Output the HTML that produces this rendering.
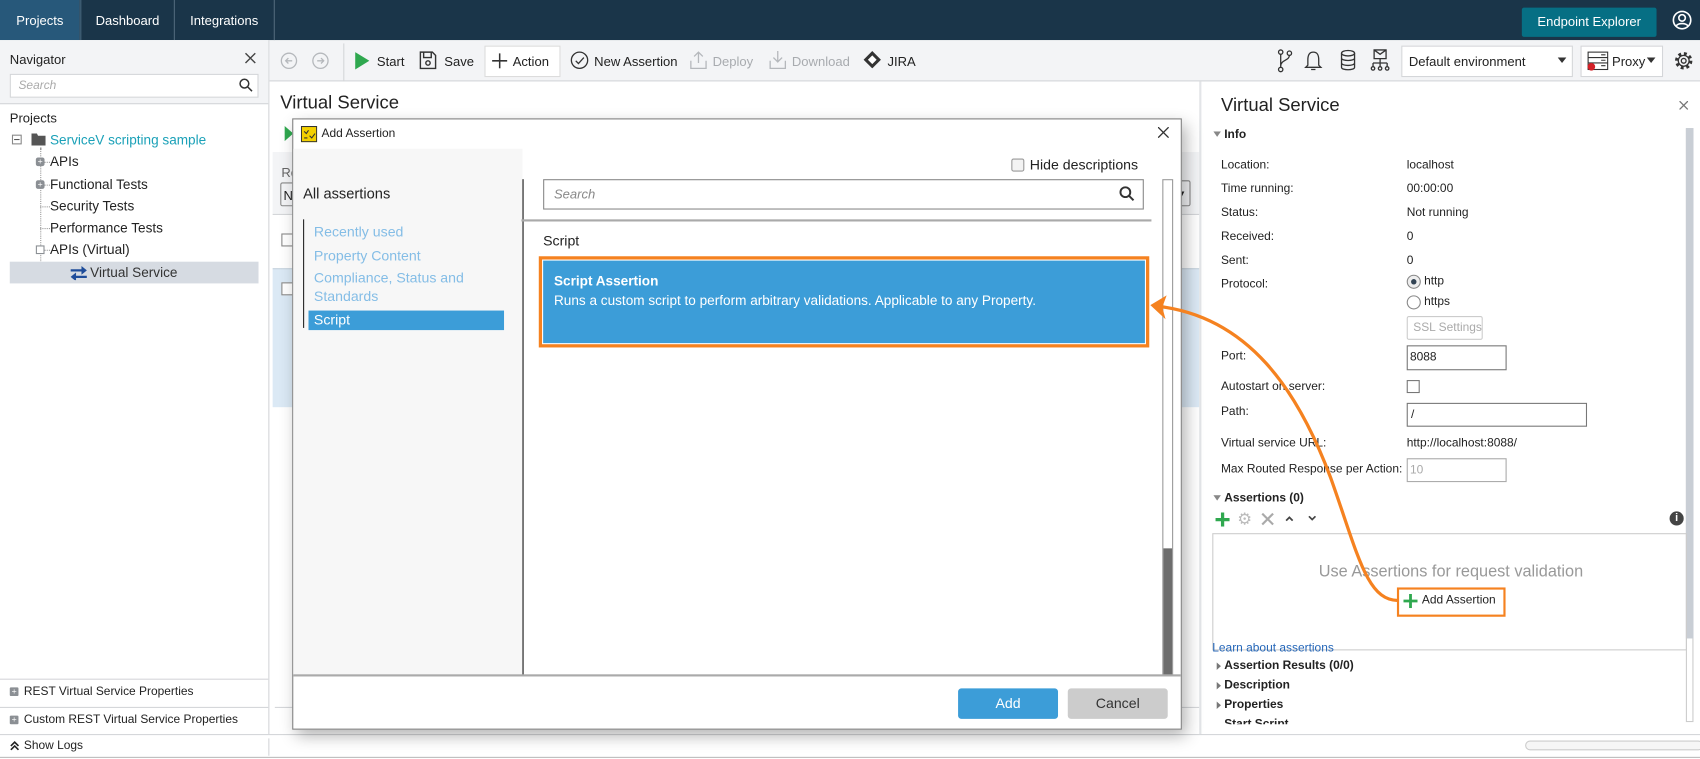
<!DOCTYPE html>
<html><head><meta charset="utf-8"><style>
*{box-sizing:border-box;margin:0;padding:0}
html,body{width:1700px;height:759px;overflow:hidden;background:#fff}
#w{position:absolute;left:0;top:0;width:1565px;height:699px;transform:scale(1.08626,1.08584);transform-origin:0 0;font-family:"Liberation Sans",sans-serif;font-size:12px;color:#222}
.a{position:absolute;white-space:nowrap}
.b{font-weight:bold}
</style></head><body><div id="w">
<!-- top bar -->
<div class="a" style="left:0;top:0;width:1565px;height:37px;background:#1a3549"></div>
<div class="a" style="left:0;top:0;width:73px;height:37px;background:#27587a"></div>
<div class="a" style="left:73px;top:0;width:2px;height:37px;background:#3b5a70"></div>
<div class="a" style="left:160px;top:0;width:1px;height:37px;background:#51697b"></div>
<div class="a" style="left:252px;top:0;width:1px;height:37px;background:#51697b"></div>
<div class="a" style="left:15px;top:12px;color:#fff;font-size:12px">Projects</div>
<div class="a" style="left:88px;top:12px;color:#fff;font-size:12px">Dashboard</div>
<div class="a" style="left:175px;top:12px;color:#fff;font-size:12px">Integrations</div>
<div class="a" style="left:1401px;top:7px;width:124px;height:27px;background:#066f84;border-radius:2px;color:#fff;font-size:12px;text-align:center;line-height:27px">Endpoint Explorer</div>
<svg class="a" style="left:1539px;top:9px" width="19" height="19" viewBox="0 0 19 19" fill="none" stroke="#fff" stroke-width="1.5"><circle cx="9.5" cy="9.5" r="8"/><circle cx="9.5" cy="7.5" r="3"/><path d="M4 15c2-3 9-3 11 0"/></svg>
<!-- toolbar -->
<div class="a" style="left:248px;top:37px;width:1317px;height:38px;background:#f3f4f6;border-bottom:1px solid #d4d6d9"></div>
<svg class="a" style="left:258px;top:48px" width="50" height="16" fill="none" stroke="#b5b8bc" stroke-width="1.2"><circle cx="8" cy="8" r="7"/><path d="M11 8H5M7.5 5.5 5 8l2.5 2.5"/><circle cx="37" cy="8" r="7"/><path d="M34 8h6M37.5 5.5 40 8l-2.5 2.5"/></svg>
<div class="a" style="left:316px;top:40px;width:1px;height:35px;background:#d4d6d9"></div>
<svg class="a" style="left:326px;top:48px" width="14" height="16"><path d="M1 0 14 8 1 16z" fill="#2fa84f"/></svg>
<div class="a" style="left:347px;top:50px">Start</div>
<svg class="a" style="left:386px;top:47px" width="16" height="17" fill="none" stroke="#333" stroke-width="1.3"><path d="M1 1h11l3 3v12H1z"/><path d="M4 1v5h7V1"/><circle cx="8" cy="11" r="2"/></svg>
<div class="a" style="left:409px;top:50px">Save</div>
<div class="a" style="left:446px;top:42px;width:70px;height:29px;background:#fff;border:1px solid #dcdcdc"></div>
<svg class="a" style="left:453px;top:49px" width="14" height="14" stroke="#333" stroke-width="1.4"><path d="M7 0v14M0 7h14"/></svg>
<div class="a" style="left:472px;top:50px">Action</div>
<svg class="a" style="left:525px;top:47px" width="17" height="17" fill="none" stroke="#333" stroke-width="1.2"><circle cx="8.5" cy="8.5" r="7.5"/><path d="M5 9l2.5 2.5L12.5 6"/></svg>
<div class="a" style="left:547px;top:50px">New Assertion</div>
<svg class="a" style="left:635px;top:46px" width="16" height="18" fill="none" stroke="#b5b8bc" stroke-width="1.2"><path d="M8 12V2M4 6l4-4 4 4M1 10v7h14v-7"/></svg>
<div class="a" style="left:656px;top:50px;color:#a8abaf">Deploy</div>
<svg class="a" style="left:708px;top:46px" width="16" height="18" fill="none" stroke="#b5b8bc" stroke-width="1.2"><path d="M8 1v10M4 7l4 4 4-4M1 10v7h14v-7"/></svg>
<div class="a" style="left:729px;top:50px;color:#a8abaf">Download</div>
<svg class="a" style="left:795px;top:47px" width="16" height="16"><path d="M8 0 16 8 8 16 0 8z" fill="#333"/><path d="M8 4 12 8 8 12 4 8z" fill="#fff"/></svg>
<div class="a" style="left:817px;top:50px">JIRA</div>
<svg class="a" style="left:1176px;top:45px" width="110" height="22" fill="none" stroke="#333" stroke-width="1.2"><circle cx="3" cy="3" r="2"/><circle cx="3" cy="19" r="2"/><circle cx="11" cy="4" r="2"/><path d="M3 5v12M11 6c0 5-8 4-8 10"/><path d="M33 3c-4 0-5 3-5 7v5l-2 2h14l-2-2v-5c0-4-1-7-5-7zM31 19h4"/><ellipse cx="65" cy="4" rx="6" ry="2.5"/><path d="M59 4v13c0 3 12 3 12 0V4M59 8.5c0 3 12 3 12 0M59 13c0 3 12 3 12 0"/><path d="M89 1h11v8H89zM89 1l5.5 4L100 1M94.5 9v4M88 13h13M88 13v3M94.5 13v3M101 13v3"/><circle cx="88" cy="18" r="1.6"/><circle cx="94.5" cy="18" r="1.6"/><circle cx="101" cy="18" r="1.6"/></svg>
<div class="a" style="left:1290px;top:42px;width:158px;height:29px;background:#fff;border:1px solid #d4d6d9"></div>
<div class="a" style="left:1297px;top:50px">Default environment</div>
<svg class="a" style="left:1434px;top:53px" width="8" height="5"><path d="M0 0h8L4 5z" fill="#333"/></svg>
<div class="a" style="left:1455px;top:42px;width:76px;height:29px;background:#fff;border:1px solid #d4d6d9"></div>
<svg class="a" style="left:1461px;top:47px" width="20" height="19" fill="none" stroke="#333" stroke-width="1"><rect x="1" y="1" width="18" height="16"/><path d="M1 6h18M1 11h18M13 3.5h4M13 8.5h4M13 13.5h4"/><circle cx="4" cy="14.5" r="3.5" fill="#d32027" stroke="none"/></svg>
<div class="a" style="left:1484px;top:50px">Proxy</div>
<svg class="a" style="left:1516px;top:53px" width="8" height="5"><path d="M0 0h8L4 5z" fill="#333"/></svg>
<svg class="a" style="left:1541px;top:47px" width="18" height="18" fill="none" stroke="#333"><circle cx="9" cy="9" r="6.5" stroke-width="3" stroke-dasharray="2.6 2.5"/><circle cx="9" cy="9" r="5" stroke-width="1.2"/><circle cx="9" cy="9" r="2.2" stroke-width="1.2"/></svg>
<!-- navigator -->
<div class="a" style="left:0;top:37px;width:248px;height:662px;background:#fff;border-right:1px solid #d4d6d9"></div>
<div class="a" style="left:0;top:37px;width:247px;height:59px;background:#f3f4f6;border-bottom:1px solid #d4d6d9"></div>
<div class="a" style="left:9px;top:48px">Navigator</div>
<svg class="a" style="left:225px;top:48px" width="11" height="11" stroke="#444" stroke-width="1.3"><path d="M1 1l9 9M10 1l-9 9"/></svg>
<div class="a" style="left:9px;top:68px;width:229px;height:22px;background:#fff;border:1px solid #d4d6d9"></div>
<div class="a" style="left:17px;top:73px;font-style:italic;color:#aaa;font-size:11px">Search</div>
<svg class="a" style="left:220px;top:72px" width="13" height="13" fill="none" stroke="#333" stroke-width="1.4"><circle cx="5" cy="5" r="4"/><path d="M8 8l4 4"/></svg>
<div class="a" style="left:9px;top:102px">Projects</div>
<div class="a" style="left:11px;top:124px;width:9px;height:9px;border:1px solid #888"></div>
<div class="a" style="left:13px;top:128px;width:5px;border-top:1px solid #555"></div>
<svg class="a" style="left:29px;top:122px" width="13" height="12"><path d="M0 1h5l1 2h7v9H0z" fill="#555"/></svg>
<div class="a" style="left:46px;top:122px;color:#1ba1b8;font-size:12.5px">ServiceV scripting sample</div>
<div class="a" style="left:37px;top:136px;width:0;height:114px;border-left:1px dotted #999"></div>
<div class="a" style="left:52px;top:250px;width:0;height:9px;border-left:1px dotted #999"></div>
<div class="a" style="left:52px;top:259px;width:12px;height:0;border-top:1px dotted #999"></div>
<div class="a" style="left:37px;top:149px;width:9px;border-top:1px dotted #999"></div>
<div class="a" style="left:37px;top:170px;width:9px;border-top:1px dotted #999"></div>
<div class="a" style="left:37px;top:190px;width:9px;border-top:1px dotted #999"></div>
<div class="a" style="left:37px;top:210px;width:9px;border-top:1px dotted #999"></div>
<div class="a" style="left:37px;top:230px;width:9px;border-top:1px dotted #999"></div>
<div class="a" style="left:33px;top:145px;width:8px;height:8px;background:#8b8f94;border-radius:2px;color:#fff;font-size:8px;line-height:8px;text-align:center">+</div>
<div class="a" style="left:33px;top:166px;width:8px;height:8px;background:#8b8f94;border-radius:2px;color:#fff;font-size:8px;line-height:8px;text-align:center">+</div>
<div class="a" style="left:33px;top:226px;width:8px;height:8px;border:1px solid #8b8f94;background:#fff"></div>
<div class="a" style="left:46px;top:142px;font-size:12.5px">APIs</div>
<div class="a" style="left:46px;top:163px;font-size:12.5px">Functional Tests</div>
<div class="a" style="left:46px;top:183px;font-size:12.5px">Security Tests</div>
<div class="a" style="left:46px;top:203px;font-size:12.5px">Performance Tests</div>
<div class="a" style="left:46px;top:223px;font-size:12.5px">APIs (Virtual)</div>
<div class="a" style="left:9px;top:241px;width:229px;height:20px;background:#d6dbe2"></div>
<svg class="a" style="left:65px;top:244px" width="15" height="14" fill="#1f4d9a"><path d="M0 4h10V1l5 4-5 4V6H0zM15 10H5V7l-5 4 5 4v-3h10z"/></svg>
<div class="a" style="left:83px;top:244px;font-size:12.5px;color:#333">Virtual Service</div>
<div class="a" style="left:0;top:625px;width:247px;border-top:1px solid #d4d6d9"></div>
<div class="a" style="left:9px;top:633px;width:8px;height:8px;background:#8b8f94;border-radius:1px;color:#fff;font-size:8px;line-height:8px;text-align:center">+</div>
<div class="a" style="left:22px;top:631px;font-size:11px">REST Virtual Service Properties</div>
<div class="a" style="left:0;top:651px;width:247px;border-top:1px solid #d4d6d9"></div>
<div class="a" style="left:9px;top:659px;width:8px;height:8px;background:#8b8f94;border-radius:1px;color:#fff;font-size:8px;line-height:8px;text-align:center">+</div>
<div class="a" style="left:22px;top:657px;font-size:11px">Custom REST Virtual Service Properties</div>
<div class="a" style="left:0;top:676px;width:1565px;border-top:1px solid #d4d6d9;height:23px;background:#fff"></div>
<div class="a" style="left:0;top:697px;width:1565px;border-top:1px solid #bbb"></div>
<svg class="a" style="left:9px;top:682px" width="9" height="9" fill="none" stroke="#222" stroke-width="1.5"><path d="M1 5l3.5-3.5L8 5M1 8.5 4.5 5 8 8.5"/></svg>
<div class="a" style="left:22px;top:681px;font-size:11px">Show Logs</div>
<div class="a" style="left:247px;top:680px;height:16px;border-left:1px solid #d4d6d9"></div>
<div class="a" style="left:1404px;top:682px;width:164px;height:9px;border:1px solid #ccc;border-radius:5px;background:#f6f6f6"></div>
<!-- center behind -->
<div class="a" style="left:258px;top:85px;font-size:17px">Virtual Service</div>
<svg class="a" style="left:262px;top:116px" width="8" height="14"><path d="M0 0 8 7 0 14z" fill="#2fa84f"/></svg>
<div class="a" style="left:251px;top:140px;width:853px;height:58px;background:#f3f4f6;border-bottom:1px solid #d4d6d9"></div>
<div class="a" style="left:259px;top:152px;color:#666">Ro</div>
<div class="a" style="left:258px;top:168px;width:14px;height:22px;border:1px solid #888;border-radius:2px;padding:4px 2px">N</div>
<div class="a" style="left:1081px;top:166px;width:15px;height:24px;border:1px solid #888;border-radius:2px;font-size:8px;padding:7px 2px">▼</div>
<div class="a" style="left:259px;top:215px;width:12px;height:12px;border:1px solid #888"></div>
<div class="a" style="left:251px;top:247px;width:853px;height:128px;background:#dbe9f5;border-top:1px solid #c6d2dc"></div>
<div class="a" style="left:259px;top:260px;width:12px;height:12px;border:1px solid #888;background:#fff"></div>
<div class="a" style="left:253px;top:651px;width:851px;border-top:1px solid #d4d6d9"></div>
<!-- right panel -->
<div class="a" style="left:1104px;top:75px;width:2px;height:601px;background:#e3e5e8"></div>
<div class="a" style="left:1124px;top:87px;font-size:17px">Virtual Service</div>
<svg class="a" style="left:1546px;top:93px" width="8" height="8" stroke="#777" stroke-width="1.2"><path d="M0 0l8 8M8 0 0 8"/></svg>
<div class="a" style="left:1552px;top:118px;width:7px;height:547px;border:1px solid #ccc;background:#fff"></div>
<div class="a" style="left:1552px;top:118px;width:7px;height:470px;background:#c9ced5"></div>
<svg class="a" style="left:1117px;top:121px" width="7" height="5"><path d="M0 0h7L3.5 5z" fill="#888"/></svg>
<div class="a b" style="left:1127px;top:118px;font-size:11px">Info</div>
<div class="a" style="left:1124px;top:141px;font-size:11px;line-height:22px">Location:<br>Time running:<br>Status:<br>Received:<br>Sent:<br>Protocol:</div>
<div class="a" style="left:1295px;top:141px;font-size:11px;line-height:22px">localhost<br>00:00:00<br>Not running<br>0<br>0</div>
<div class="a" style="left:1295px;top:253px;width:13px;height:13px;border:1px solid #888;border-radius:50%;background:#eee"><div style="margin:3px;width:5px;height:5px;border-radius:50%;background:#345"></div></div>
<div class="a" style="left:1311px;top:253px;font-size:11px">http</div>
<div class="a" style="left:1295px;top:272px;width:13px;height:13px;border:1px solid #888;border-radius:50%"></div>
<div class="a" style="left:1311px;top:272px;font-size:11px">https</div>
<div class="a" style="left:1295px;top:291px;width:70px;height:22px;border:1px solid #ccc;border-radius:2px;color:#aaa;font-size:11px;padding:4px 5px">SSL Settings</div>
<div class="a" style="left:1124px;top:322px;font-size:11px">Port:</div>
<div class="a" style="left:1295px;top:318px;width:92px;height:23px;border:1px solid #777;font-size:11px;padding:4px 2px">8088</div>
<div class="a" style="left:1124px;top:350px;font-size:11px">Autostart on server:</div>
<div class="a" style="left:1295px;top:350px;width:12px;height:12px;border:1px solid #777"></div>
<div class="a" style="left:1124px;top:373px;font-size:11px">Path:</div>
<div class="a" style="left:1295px;top:371px;width:166px;height:22px;border:1px solid #777;font-size:11px;padding:4px 3px">/</div>
<div class="a" style="left:1124px;top:402px;font-size:11px">Virtual service URL:</div>
<div class="a" style="left:1295px;top:402px;font-size:11px">http://localhost:8088/</div>
<div class="a" style="left:1124px;top:426px;font-size:11px">Max Routed Response per Action:</div>
<div class="a" style="left:1295px;top:422px;width:92px;height:22px;border:1px solid #aaa;font-size:11px;padding:4px 2px;color:#aaa">10</div>
<svg class="a" style="left:1117px;top:456px" width="7" height="5"><path d="M0 0h7L3.5 5z" fill="#888"/></svg>
<div class="a b" style="left:1127px;top:453px;font-size:11px">Assertions (0)</div>
<svg class="a" style="left:1119px;top:472px" width="13" height="13" stroke="#2fa84f" stroke-width="3"><path d="M6.5 0v13M0 6.5h13"/></svg>
<div class="a" style="left:1139px;top:469px;font-size:15px;color:#bbb">⚙</div>
<svg class="a" style="left:1161px;top:472px" width="12" height="12" stroke="#aaa" stroke-width="2"><path d="M1 1l10 10M11 1 1 11"/></svg>
<svg class="a" style="left:1183px;top:475px" width="8" height="5" fill="none" stroke="#444" stroke-width="1.6"><path d="M1 4.5 4 1.5 7 4.5"/></svg>
<svg class="a" style="left:1204px;top:475px" width="8" height="5" fill="none" stroke="#444" stroke-width="1.6"><path d="M1 .5 4 3.5 7 .5"/></svg>
<div class="a" style="left:1537px;top:471px;width:13px;height:13px;border-radius:50%;background:#444;color:#fff;font-size:10px;font-weight:bold;text-align:center;line-height:13px">i</div>
<div class="a" style="left:1116px;top:491px;width:437px;height:108px;border:1px solid #ccc"></div>
<div class="a" style="left:1214px;top:518px;font-size:15px;color:#999">Use Assertions for request validation</div>
<div class="a" style="left:1286px;top:541px;width:100px;height:27px;border:2px solid #f58220"></div>
<svg class="a" style="left:1292px;top:547px" width="13" height="13" stroke="#2fa84f" stroke-width="2.6"><path d="M6.5 0v13M0 6.5h13"/></svg>
<div class="a" style="left:1309px;top:547px;font-size:11px">Add Assertion</div>
<div class="a" style="left:1116px;top:591px;font-size:11px;color:#2466b8">Learn about assertions</div>
<svg class="a" style="left:1120px;top:610px" width="4" height="7"><path d="M0 0l4 3.5L0 7z" fill="#777"/></svg>
<div class="a b" style="left:1127px;top:607px;font-size:11px">Assertion Results (0/0)</div>
<svg class="a" style="left:1120px;top:628px" width="4" height="7"><path d="M0 0l4 3.5L0 7z" fill="#777"/></svg>
<div class="a b" style="left:1127px;top:625px;font-size:11px">Description</div>
<svg class="a" style="left:1120px;top:646px" width="4" height="7"><path d="M0 0l4 3.5L0 7z" fill="#777"/></svg>
<div class="a b" style="left:1127px;top:643px;font-size:11px">Properties</div>
<div class="a b" style="left:1127px;top:661px;font-size:11px;height:6px;overflow:hidden">Start Script</div>
<!-- dialog -->
<div class="a" style="left:269px;top:109px;width:819px;height:563px;background:#fff;border:1px solid #808080;box-shadow:4px 6px 14px rgba(0,0,0,.3)"></div>
<svg class="a" style="left:277px;top:116px" width="15" height="15"><rect width="15" height="15" fill="#f3d000"/><rect x=".5" y=".5" width="14" height="14" fill="none" stroke="#333"/><path d="M3 5l2 2 2-3M8 9l2 2 3-4M3 11h3" stroke="#333" fill="none"/></svg>
<div class="a" style="left:296px;top:117px;font-size:11px">Add Assertion</div>
<svg class="a" style="left:1066px;top:117px" width="10" height="10" stroke="#333" stroke-width="1.2"><path d="M0 0l10 10M10 0 0 10"/></svg>
<div class="a" style="left:270px;top:137px;width:211px;height:485px;background:#f7f7f7"></div>
<div class="a" style="left:279px;top:171px;font-size:13.5px">All assertions</div>
<div class="a" style="left:279px;top:202px;height:100px;border-left:1px solid #222"></div>
<div class="a" style="left:289px;top:203px;font-size:13px;color:#84bde6;line-height:22px">Recently used<br>Property Content</div>
<div class="a" style="left:289px;top:247px;font-size:13px;color:#84bde6;line-height:17px">Compliance, Status and<br>Standards</div>
<div class="a" style="left:284px;top:286px;width:180px;height:18px;background:#3c9dd8;color:#fff;font-size:13px;padding:1px 5px">Script</div>
<div class="a" style="left:481px;top:165px;height:457px;border-left:1px solid #111"></div>
<div class="a" style="left:931px;top:146px;width:12px;height:12px;border:1px solid #999;border-radius:2px;background:#f3f3f3"></div>
<div class="a" style="left:948px;top:144px;font-size:13px">Hide descriptions</div>
<div class="a" style="left:500px;top:165px;width:553px;height:28px;border:1px solid #888"></div>
<div class="a" style="left:510px;top:172px;font-style:italic;color:#888;font-size:12px">Search</div>
<svg class="a" style="left:1030px;top:171px" width="15" height="15" fill="none" stroke="#333" stroke-width="1.8"><circle cx="6" cy="6" r="4.5"/><path d="M9.5 9.5l4 4"/></svg>
<div class="a" style="left:480px;top:202px;width:580px;height:2px;background:#aaa"></div>
<div class="a" style="left:500px;top:214px;font-size:13px">Script</div>
<div class="a" style="left:496px;top:236px;width:562px;height:84px;border:3px solid #f58220"></div>
<div class="a" style="left:500px;top:240px;width:554px;height:76px;background:#3c9dd8"></div>
<div class="a b" style="left:510px;top:252px;font-size:12.5px;color:#fff">Script Assertion</div>
<div class="a" style="left:510px;top:270px;font-size:12.5px;color:#fff">Runs a custom script to perform arbitrary validations. Applicable to any Property.</div>
<div class="a" style="left:1070px;top:165px;width:10px;height:457px;border:1px solid #999;background:#fff"></div>
<div class="a" style="left:1071px;top:505px;width:8px;height:117px;background:#6d6d6d"></div>
<div class="a" style="left:270px;top:621px;width:817px;height:2px;background:#aaa"></div>
<div class="a" style="left:882px;top:634px;width:92px;height:28px;background:#3c9dd8;border-radius:3px;color:#fff;font-size:13px;text-align:center;line-height:28px">Add</div>
<div class="a" style="left:983px;top:634px;width:92px;height:28px;background:#ccc;border-radius:3px;color:#333;font-size:13px;text-align:center;line-height:28px">Cancel</div>
<!-- arrow -->
<svg class="a" style="left:0;top:0" width="1565" height="699" fill="none"><path d="M1066 282C1150 292 1195 360 1225 440C1250 510 1258 553 1287 553" stroke="#f58220" stroke-width="3"/><path d="M1059 281 1074 272 1070 283 1073 294z" fill="#f58220"/></svg>
</div></body></html>
